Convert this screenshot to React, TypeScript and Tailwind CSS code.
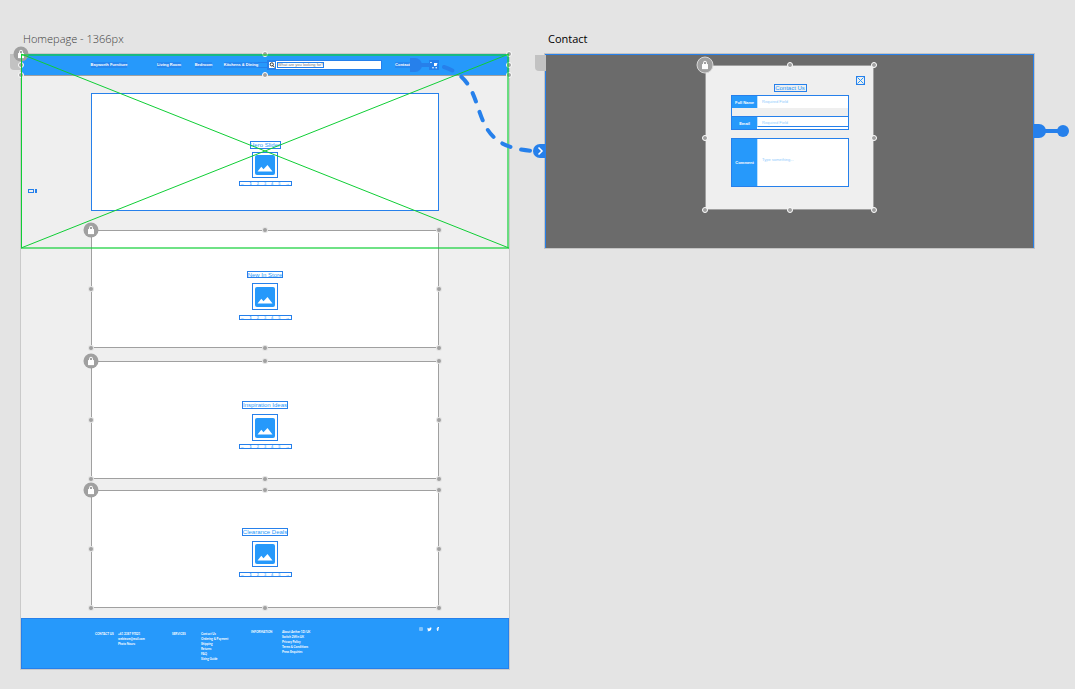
import React from "react";

const handleSpots = [
  "left-0 top-0",
  "left-1/2 top-0",
  "left-full top-0",
  "left-0 top-1/2",
  "left-full top-1/2",
  "left-0 top-full",
  "left-1/2 top-full",
  "left-full top-full",
];

function Handles({ ringed = false }: { ringed?: boolean }) {
  return (
    <>
      {handleSpots.map((spot) => (
        <span
          key={spot}
          className={`absolute z-10 -translate-x-1/2 -translate-y-1/2 rounded-full border bg-[#a0a0a0] size-[6px] ${
            ringed ? "border-white" : "border-white/70"
          } ${spot}`}
        />
      ))}
    </>
  );
}

function LockBadge({ ringed = false }: { ringed?: boolean }) {
  return (
    <span
      className={`absolute left-0 top-0 z-20 flex -translate-x-1/2 -translate-y-1/2 items-center justify-center rounded-full bg-[#a0a0a0] ${
        ringed ? "size-[17px] border border-[#d8d8d8]" : "size-[15px]"
      }`}
    >
      <svg className="h-[9px] w-[7px]" viewBox="0 0 7 9" fill="none">
        <path d="M2 4.500V2.200a1.500 1.500 0 0 1 3 0v2.300" stroke="#fff" strokeWidth="1" />
        <rect x="0.5" y="3.5" width="6" height="5.300" rx="0.5" fill="#fff" />
      </svg>
    </span>
  );
}

function ImageIcon() {
  return (
    <svg className="size-5 shrink-0" viewBox="0 0 20 20">
      <rect width="20" height="20" rx="2" fill="#2699fb" />
      <path d="M2.500 16.500 6.300 11.800l2.200 2.500L12.500 10l5 6.500z" fill="#fff" />
    </svg>
  );
}

function Pager() {
  return (
    <nav className="flex h-[5px] w-[53px] items-center justify-between overflow-hidden border border-[#2680eb] px-px text-[4px] font-bold leading-[4px] text-[#2699fb]">
      <a href="#prev">←</a>
      <a href="#1">1</a>
      <a href="#2" className="opacity-60">2</a>
      <a href="#3" className="opacity-60">3</a>
      <a href="#4" className="opacity-60">4</a>
      <a href="#5" className="opacity-60">5</a>
      <a href="#next">→</a>
    </nav>
  );
}

type PanelProps = {
  title: string;
  titleClass: string;
  iconClass?: string;
  className: string;
  locked?: boolean;
};

function Panel({ title, titleClass, iconClass = "h-[26px]", className, locked = true }: PanelProps) {
  return (
    <section
      className={`relative flex h-[118px] flex-col items-center bg-white ring-1 ring-inset ${
        locked ? "ring-[#a0a0a0]" : "ring-[#2680eb]"
      } ${className}`}
    >
      <h2
        className={`flex items-center justify-center whitespace-nowrap border border-[#2680eb] text-[6px] leading-[6px] text-[#2699fb] ${titleClass}`}
      >
        {title}
      </h2>
      <div className={`flex w-[26px] items-center justify-center border border-[#2680eb] ${iconClass}`}>
        <ImageIcon />
      </div>
      <Pager />
      {locked && (
        <>
          <Handles />
          <LockBadge />
        </>
      )}
    </section>
  );
}

function NavLink({ children, className }: { children: React.ReactNode; className: string }) {
  return (
    <a
      href="#nav"
      className={`flex h-[6px] items-center justify-center whitespace-nowrap bg-[#2680eb]/70 text-[4px] font-bold leading-[6px] text-white ${className}`}
    >
      {children}
    </a>
  );
}

function TopBar() {
  return (
    <header className="relative flex h-[22px] items-center border-b border-[#a0a0a0] bg-[#2699fb] pl-[70px]">
      <NavLink className="w-9">Bayworth Furniture</NavLink>
      <NavLink className="ml-[30px] w-6">Living Room</NavLink>
      <NavLink className="ml-[14px] w-[17px]">Bedroom</NavLink>
      <NavLink className="ml-[12px] w-[34px]">Kitchens &amp; Dining</NavLink>
      <span className="h-[6px] w-[9px] border-y border-[#2680eb]" />
      <label className="flex h-[10px] w-[115px] items-center border border-[#2680eb] bg-white">
        <span className="flex size-[8px] items-center justify-center border border-[#2680eb]">
          <svg className="size-[6px]" viewBox="0 0 6 6" fill="none" stroke="#333" strokeWidth="1">
            <circle cx="2.800" cy="2.400" r="1.600" />
            <path d="M4 3.600 5.400 5.400" />
          </svg>
        </span>
        <input
          aria-label="Search"
          placeholder="What are you looking for?"
          className="ml-px h-[6px] w-[47px] border border-[#2680eb] text-[4px] leading-[4px] placeholder:text-[#777]"
        />
      </label>
      <NavLink className="ml-[13px] w-[15px]">Contact</NavLink>
      <button aria-label="Cart" className="ml-[19px] flex size-[10px] items-center justify-center bg-[#2680eb]">
        <svg className="size-2" viewBox="0 0 8 8" fill="#fff">
          <path d="M0 1h1.500L2 2h5.500L6.500 5H2.800L1.300 1.800H0z" />
          <circle cx="3" cy="6.700" r=".8" />
          <circle cx="6.200" cy="6.700" r=".8" />
        </svg>
      </button>
      <Handles ringed />
      <LockBadge />
    </header>
  );
}

function FooterList({ items, className }: { items: string[]; className: string }) {
  return (
    <ul className={className}>
      {items.map((item) => (
        <li key={item}>
          <a href="#footer" className="block">{item}</a>
        </li>
      ))}
    </ul>
  );
}

function Footer() {
  return (
    <footer className="mt-[10px] flex h-[51px] items-start whitespace-nowrap border border-[#2680eb] bg-[#2699fb] pl-[73px] font-['Liberation_Sans_Narrow','Lato',sans-serif] text-[3px] font-bold leading-[5px] text-white">
      <h3 className="mt-[13px] w-[23px]">CONTACT US</h3>
      <FooterList className="mt-[13px] w-[54px]" items={["+61 2387 97021", "webteam@mail.com", "Photo Noura"]} />
      <h3 className="mt-[13px] w-[29px]">SERVICES</h3>
      <FooterList
        className="mt-[13px] w-[50px]"
        items={["Contact Us", "Ordering & Payment", "Shipping", "Returns", "FAQ", "Sizing Guide"]}
      />
      <h3 className="mt-[11px] w-[31px]">INFORMATION</h3>
      <FooterList
        className="mt-[11px] w-[137px]"
        items={["About Aether 1D/UK", "Switch 2Win UK", "Privacy Policy", "Terms & Conditions", "Press Enquiries"]}
      />
      <div className="mt-[8px] flex gap-1">
        <a href="#instagram" aria-label="Instagram">
          <svg className="size-[4px]" viewBox="0 0 4 4" fill="none" stroke="#d4ebfe" strokeWidth=".6">
            <rect x=".4" y=".4" width="3.200" height="3.200" rx=".8" />
            <circle cx="2" cy="2" r=".7" />
          </svg>
        </a>
        <a href="#twitter" aria-label="Twitter">
          <svg className="size-[5px]" viewBox="0 0 5 5" fill="#fff">
            <path d="M.5.8 2.400 1.700C2.300.6 3.600.2 4.100.8l.7-.1-.5.8C4.300 3.600 2.100 4.800.2 4l1.100-.5L.5 2.600z" />
          </svg>
        </a>
        <a href="#facebook" aria-label="Facebook">
          <svg className="size-[4px]" viewBox="0 0 4 4" fill="#fff">
            <path d="M1.200 4V2.400H.6V1.500h.6C1.200.5 1.800 0 3 .1v.8c-.6 0-.8.1-.8.6H3l-.2.9h-.6V4z" />
          </svg>
        </a>
      </div>
    </footer>
  );
}

function ViewportGuide() {
  return (
    <svg
      className="pointer-events-none absolute left-0 top-0 z-30 h-[194px] w-full overflow-visible"
      viewBox="0 0 488 194"
      preserveAspectRatio="none"
      fill="none"
      stroke="#0fce35"
    >
      <path d="M0.500 0V194M0 0 488 194M0 194 488 0" />
      <path d="M0 1H487V194H0" strokeWidth="2" opacity=".6" />
    </svg>
  );
}

function ContactForm() {
  const label = "flex w-[25px] shrink-0 items-center justify-center whitespace-nowrap bg-[#2699fb] text-[4px] font-bold leading-[5px] text-white";
  const field = "min-w-0 flex-1 resize-none border-l border-[#bce0fd] bg-white px-1 text-[4px] leading-[6px] placeholder:text-[#8fcbfd]";
  return (
    <form className="relative flex h-[145px] w-[169px] flex-col bg-[#efefef] pl-[26px] pr-[25px] pt-[11px] ring-1 ring-inset ring-[#a0a0a0]">
      <button
        type="button"
        aria-label="Close"
        className="-mr-4 flex size-[9px] items-center justify-center self-end border border-[#2680eb]"
      >
        <svg className="size-[7px]" viewBox="0 0 7 7" fill="none" stroke="#2699fb">
          <path d="M.5.5l6 6M6.500.5l-6 6" />
        </svg>
      </button>
      <h2 className="-mt-px flex h-[8px] w-[33px] items-center justify-center self-center whitespace-nowrap border border-[#2680eb] text-[6px] leading-[6px] text-[#2699fb]">
        Contact Us
      </h2>
      <div className="mt-[3px] border border-[#2680eb]">
        <div className="flex h-3">
          <label htmlFor="full-name" className={label}>Full Name</label>
          <input id="full-name" placeholder="Required Field" className={field} />
        </div>
        <div className="mt-2 flex h-[13px] border-t border-[#2680eb]">
          <label htmlFor="email" className={label}>Email</label>
          <div className="flex min-w-0 flex-1 flex-col bg-white">
            <input id="email" placeholder="Required Field" className={`${field} border-b border-b-[#2680eb] pt-[3px]`} />
            <span className="h-0.5" />
          </div>
        </div>
      </div>
      <div className="mt-2 flex h-[49px] border border-[#2680eb]">
        <label htmlFor="comment" className={label}>Comment</label>
        <textarea id="comment" placeholder="Type something..." className={`${field} pt-[18px]`} />
      </div>
      <Handles ringed />
      <LockBadge ringed />
    </form>
  );
}

function Wires() {
  return (
    <svg
      className="pointer-events-none absolute left-0 top-0 z-40 h-[200px] w-[1075px]"
      viewBox="0 0 1075 200"
      fill="none"
    >
      <path d="M410 58h5a7 7 0 0 1 0 14h-5z" fill="#2680eb" />
      <path d="M420 65H434" stroke="#2680eb" strokeWidth="4" />
      <path
        d="M444 67C497 84 457 151 540 151"
        stroke="#2680eb"
        strokeWidth="4"
        strokeLinecap="round"
        strokeDasharray="9 11"
      />
      <path d="M546 144h-6a7 7 0 0 0 0 14h6z" fill="#2680eb" />
      <path d="M538.500 147.500 542 151l-3.500 3.500" stroke="#fff" strokeWidth="1.500" />
      <path d="M1034 124h5a7 7 0 0 1 0 14h-5z" fill="#2680eb" />
      <path d="M1044 131H1060" stroke="#2680eb" strokeWidth="4" />
      <circle cx="1063" cy="131" r="6" fill="#2680eb" />
    </svg>
  );
}

function HomeTab() {
  return <span className="absolute right-full top-0 h-4 w-[11px] rounded-bl bg-[#c2c2c2]" />;
}

export default function App() {
  return (
    <main className="relative flex min-h-screen items-start gap-9 overflow-hidden bg-[#e4e4e4] pb-5 pl-[21px] pt-[31px] font-['Liberation_Sans',Arial,sans-serif]">
      <article className="w-[488px] shrink-0">
        <h1 className="mb-[7px] pl-0.5 font-['Open_Sans',sans-serif] text-[11px] font-light leading-4 text-[#3c3c3c]">
          Homepage - 1366px
        </h1>
        <div className="relative bg-[#efefef] shadow-[0_0_0_1px_#cacaca]">
          <HomeTab />
          <TopBar />
          <div className="px-[70px] pt-[17px]">
            <Panel
              title="Hero Slider"
              titleClass="h-[8px] w-[31px]"
              iconClass="my-[3px] h-[26px]"
              className="pt-[48px]"
              locked={false}
            />
            <Panel
              title="New In Store"
              titleClass="h-[7px] w-9"
              iconClass="my-[5px] h-[27px]"
              className="mt-[19px] pt-[41px]"
            />
            <Panel
              title="Inspiration Ideas"
              titleClass="h-[8px] w-[46px]"
              iconClass="mb-[3px] mt-[5px] h-[27px]"
              className="mt-[13px] pt-[40px]"
            />
            <Panel
              title="Clearance Deals"
              titleClass="h-[8px] w-[46px]"
              iconClass="my-[5px] h-[26px]"
              className="mt-[11px] pt-[38px]"
            />
          </div>
          <Footer />
          <ViewportGuide />
          <span className="absolute left-[7px] top-[135px] flex gap-px">
            <span className="h-1 w-[6px] border border-[#2680eb]" />
            <span className="h-1 w-0.5 bg-[#2680eb]" />
          </span>
        </div>
      </article>
      <article className="w-[489px] shrink-0">
        <h1 className="mb-[7px] pl-[3px] font-['Open_Sans',sans-serif] text-[11px] leading-4 text-black">Contact</h1>
        <div className="relative flex h-[194px] justify-center border-l border-t border-[#2680eb] border-r bg-[#6b6b6b] pt-[10px] shadow-[0_0_0_1px_#c4c4c4]">
          <HomeTab />
          <ContactForm />
        </div>
      </article>
      <Wires />
    </main>
  );
}
